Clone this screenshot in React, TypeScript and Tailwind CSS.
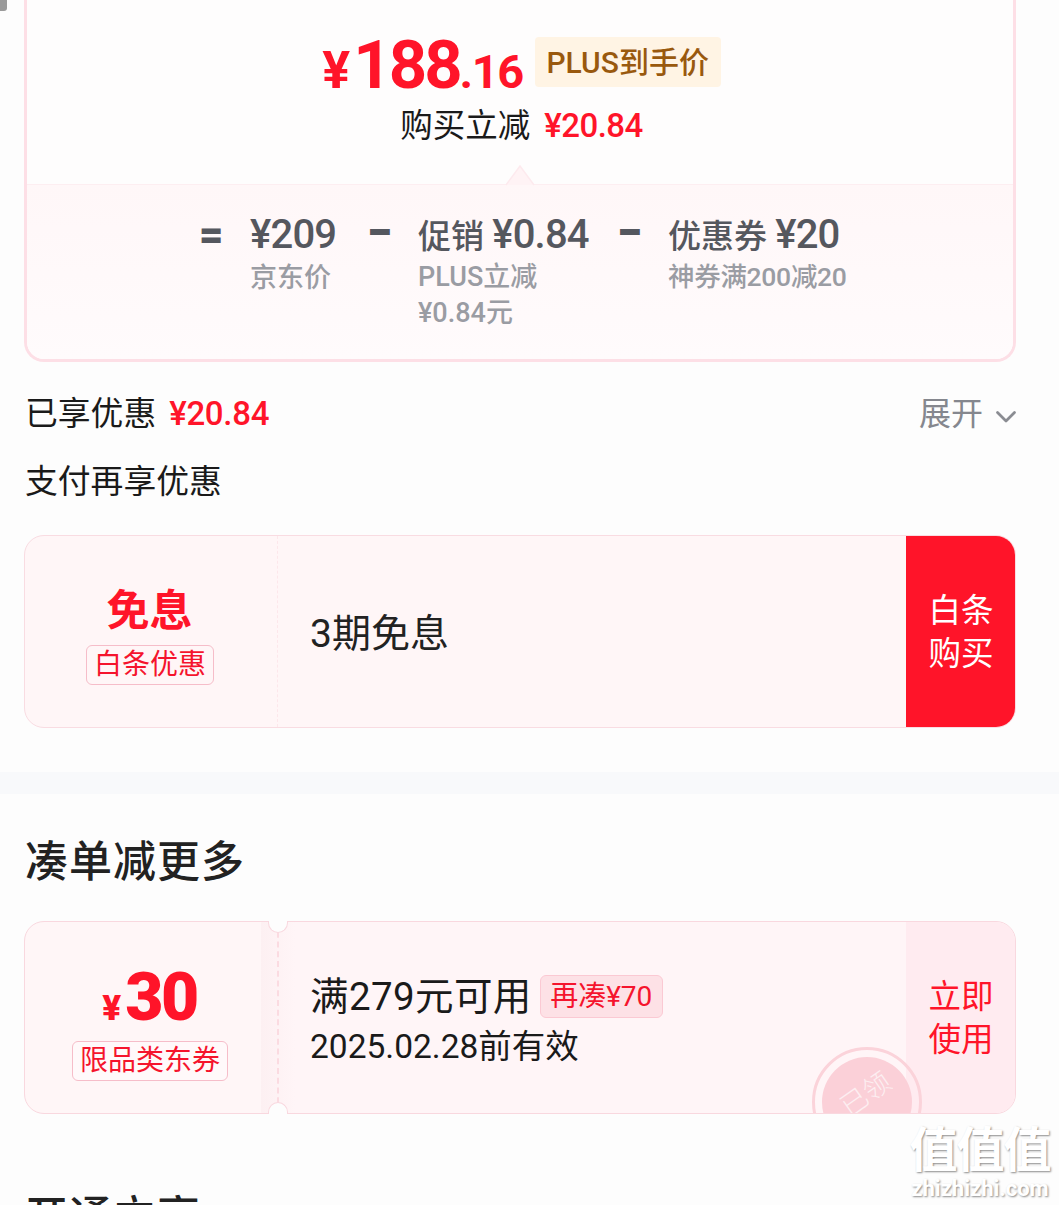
import React from "react";

function Caret() {
  return (
    <svg className="absolute left-[477px] top-[-20px] w-[32px] h-[21px]" viewBox="0 0 32 21" fill="none">
      <path d="M2 20 L16 1 L30 20" fill="#fff3f5" stroke="#fdeaee" strokeWidth="1.5" />
    </svg>
  );
}

function Chevron() {
  return (
    <svg className="w-[22px] h-[14px] ml-[12px] mt-[6px]" viewBox="0 0 22 14" fill="none">
      <path d="M2.5 2.5 L11 11 L19.5 2.5" stroke="#8a8c92" strokeWidth="2.8" strokeLinecap="round" strokeLinejoin="round" />
    </svg>
  );
}

function Stamp() {
  return (
    <div className="absolute left-[787px] top-[125px] w-[110px] h-[110px] rounded-full border-[3px] border-[#fbd3da] p-[7px] overflow-hidden">
      <div className="w-full h-full rounded-full bg-[#fbd0d8] flex justify-center pt-[24px]">
        <span className="-rotate-[35deg] text-[#fdeef1] text-[27px] font-light leading-none h-[30px]">已领</span>
      </div>
    </div>
  );
}

export default function App() {
  return (
    <div className="relative w-[1059px] h-[1205px] overflow-hidden bg-[#fdfdfd] text-[#1a1a1a] font-['Roboto','Noto_Sans_CJK_SC',sans-serif]">
      <div className="absolute left-0 top-0 w-[7px] h-[11px] rounded-br-[3px] bg-[#9a9a9a]" />

      {/* summary card */}
      <div className="mx-[24px] mt-[-20px] w-[992px] h-[382px] rounded-b-[20px] border-[3px] border-t-0 border-[#fddfe6] bg-[#fefdfd] flex flex-col overflow-hidden">
        <div className="h-[204px] flex flex-col items-center shrink-0 pl-[3px]">
          <div className="flex items-center h-[50px] mt-[57px]">
            <div className="flex items-baseline text-[#ff1429] font-bold leading-none pt-[6px]">
              <span className="text-[52px] mr-[3px]">¥</span>
              <span className="text-[67px] tracking-[-3px]">188</span>
              <span className="text-[47px] tracking-[-1.5px]">.16</span>
            </div>
            <div className="ml-[12px] h-[50px] w-[186px] rounded-[4px] bg-[#fff4e4] text-[#99590e] text-[30px] font-medium flex items-center justify-center whitespace-nowrap">PLUS到手价</div>
          </div>
          <div className="flex items-center mt-[19px] h-[40px]">
            <span className="text-[32.5px]">购买立减</span>
            <span className="ml-[14px] text-[#ff1429] text-[33px] font-medium tracking-[-0.5px]">¥20.84</span>
          </div>
        </div>
        <div className="relative flex-1 border-t-[1.5px] border-[#fdeef1] bg-gradient-to-b from-[#fff7f8] to-[#fffbfc] flex pl-[172px] pt-[28px]">
          <Caret />
          <span className="w-[51px] text-[#55575e] text-[42px] font-black leading-[44px]">=</span>
          <div className="w-[117px]">
            <div className="text-[#55575e] text-[40px] font-medium leading-[44px] tracking-[-0.8px] whitespace-nowrap">¥209</div>
            <div className="text-[#9a9ca3] text-[27px] font-medium leading-[36px] mt-[3px]">京东价</div>
          </div>
          <span className="w-[51px] text-[#55575e] text-[46px] font-black leading-[38px]">−</span>
          <div className="w-[199px]">
            <div className="text-[#55575e] text-[33px] font-medium leading-[44px] whitespace-nowrap">促销 <span className="text-[40px] tracking-[-0.8px]">¥0.84</span></div>
            <div className="text-[#9a9ca3] text-[27px] font-medium leading-[36px]">PLUS立减<br />¥0.84元</div>
          </div>
          <span className="w-[51px] text-[#55575e] text-[46px] font-black leading-[38px]">−</span>
          <div>
            <div className="text-[#55575e] text-[33px] font-medium leading-[44px] whitespace-nowrap">优惠券 <span className="text-[40px] tracking-[-0.8px]">¥20</span></div>
            <div className="text-[#9a9ca3] text-[26.5px] font-medium leading-[36px] whitespace-nowrap tracking-[-0.3px]">神券满200减20</div>
          </div>
        </div>
      </div>

      <div className="mx-[25px] mt-[32px] h-[40px] flex items-center justify-between w-[992px]">
        <div className="flex items-center">
          <span className="text-[32.8px] leading-[40px]">已享优惠</span>
          <span className="ml-[13px] text-[#ff1429] text-[33px] font-medium tracking-[-0.3px]">¥20.84</span>
        </div>
        <div className="flex items-center text-[#85878e] text-[32px]">展开<Chevron /></div>
      </div>
      <div className="mx-[25px] mt-[28px] text-[32.8px] leading-[40px]">支付再享优惠</div>

      {/* interest free */}
      <div className="mx-[24px] mt-[33px] w-[992px] h-[193px] rounded-[20px] border border-[#f9dce2] bg-[#fff6f7] flex overflow-hidden">
        <div className="w-[253px] flex flex-col items-center border-r-[1.5px] border-dashed border-[#fde7eb]">
          <div className="text-[#ff1429] text-[43px] font-bold leading-[50px] mt-[50px] mr-[3px]">免息</div>
          <div className="mt-[9px] h-[40px] w-[128px] mr-[2px] rounded-[6px] border border-[#f6bdc9] text-[#f5142d] text-[28px] leading-[38px] text-center whitespace-nowrap">白条优惠</div>
        </div>
        <div className="flex-1 flex items-center pl-[32px] text-[39px] text-[#222] pt-[6px]">3期免息</div>
        <div className="w-[110px] -mr-[1px] bg-[#ff1429] text-white text-[32.5px] leading-[43px] flex items-center justify-center text-center pt-[2px]">白条<br />购买</div>
      </div>

      <div className="mt-[44px] h-[22px] bg-[#f8f9fb]" />

      <div className="mx-[25px] mt-[40px] text-[43px] font-medium leading-[56px] tracking-[1px] text-[#222]">凑单减更多</div>

      {/* coupon */}
      <div className="relative mx-[24px] mt-[31px] w-[992px] h-[193px] rounded-[20px] border border-[#f9d8df] bg-[#fff6f7] flex overflow-hidden">
        <div className="w-[236px] flex flex-col items-center">
          <div className="flex items-baseline text-[#ff1429] font-bold leading-none mt-[43px] ml-[13px]">
            <span className="text-[35px] font-black mr-[4px]">¥</span>
            <span className="text-[66px] font-black tracking-[-2.5px]">30</span>
          </div>
          <div className="mt-[10px] h-[40px] w-[156px] rounded-[6px] border border-[#f6bdc9] bg-[#fff9fa] text-[#f5142d] text-[28px] leading-[38px] text-center whitespace-nowrap ml-[14px]">限品类东券</div>
        </div>
        <div className="w-[34px] bg-gradient-to-r from-[#fdf0f2] to-[#fff5f7] flex justify-center">
          <div className="h-full border-l-[2px] border-dashed border-[#fbdbe1]" />
        </div>
        <div className="flex-1 bg-[#fff5f7] pl-[15px] pt-[50px]">
          <div className="flex items-center h-[50px]">
            <span className="text-[38.5px] tracking-[0.4px]">满279元可用</span>
            <span className="ml-[8px] -mt-[2px] h-[43px] w-[123px] rounded-[6px] border border-[#fbc9d3] bg-[#fde1e6] text-[#f5142d] text-[28px] leading-[41px] text-center whitespace-nowrap">再凑¥70</span>
          </div>
          <div className="text-[33.5px] leading-[44px] mt-[3px]">2025.02.28前有效</div>
        </div>
        <div className="w-[110px] -mr-[1px] bg-[#ffebf0] text-[#ff1429] text-[32.5px] leading-[43px] flex items-center justify-center text-center pt-[2px]">立即<br />使用</div>
        <Stamp />
      </div>
      <div className="absolute left-[268px] top-[921px] w-[20px] h-[12px] rounded-b-full bg-[#fdfdfd] border border-t-0 border-[#f9d8df]" />
      <div className="absolute left-[268px] top-[1102px] w-[20px] h-[12px] rounded-t-full bg-[#fdfdfd] border border-b-0 border-[#f9d8df]" />

      <div className="mx-[25px] mt-[75px] text-[43px] font-medium leading-[56px] tracking-[1px] text-[#222]">开通立享</div>

      {/* watermark */}
      <div className="absolute left-[905px] top-[1123px] w-[150px] text-center text-white [text-shadow:1px_1px_2px_rgba(0,0,0,0.45)]">
        <div className="text-[48px] leading-[56px] font-bold tracking-[-1px] whitespace-nowrap">值值值</div>
        <div className="text-[22px] leading-[20px] font-bold whitespace-nowrap">zhizhizhi.com</div>
      </div>
    </div>
  );
}
